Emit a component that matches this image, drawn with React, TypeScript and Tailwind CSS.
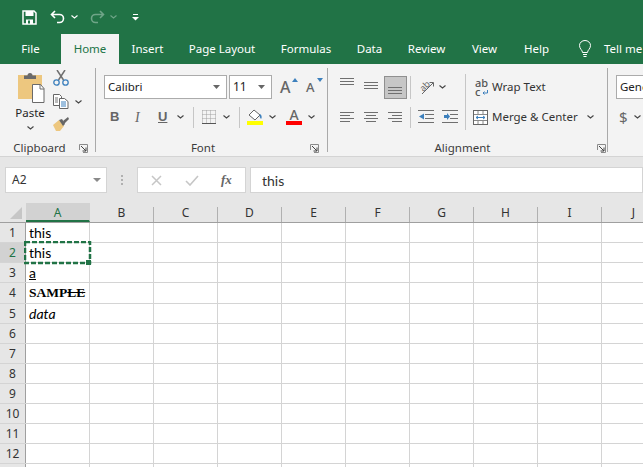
import React from "react";

const COLUMNS = ["A", "B", "C", "D", "E", "F", "G", "H", "I", "J"];
const ROW_HEIGHTS = [20, 20, 20, 21, 20, 20, 20, 20, 20, 20, 20, 20, 20];

const TABS = [
	{ name: "File", width: "w-[61px]" },
	{ name: "Home", width: "w-[58px]" },
	{ name: "Insert", width: "w-[57px]" },
	{ name: "Page Layout", width: "w-[92px]" },
	{ name: "Formulas", width: "w-[76px]" },
	{ name: "Data", width: "w-[51px]" },
	{ name: "Review", width: "w-[63px]" },
	{ name: "View", width: "w-[53px]" },
	{ name: "Help", width: "w-[51px]" },
];

const Chevron = ({ className = "" }: { className?: string }) => (
	<svg width="7" height="4" viewBox="0 0 7 4" className={`shrink-0 ${className}`}>
		<path d="M.5.5l3 2.5 3-2.5" fill="none" stroke="currentColor" strokeWidth="1.1" />
	</svg>
);

const Launcher = () => (
	<svg width="9" height="9" viewBox="0 0 9 9" className="shrink-0">
		<path d="M.5 6V.5H8.500V8.500H4" fill="none" stroke="#8a8a8a" />
		<path d="M2 2l5 5M7 3.500V7H3.500" fill="none" stroke="#444" />
	</svg>
);

const TextLines = ({ lines }: { lines: Array<[number, number, number]> }) => (
	<svg width="15" height="15" viewBox="0 0 15 15" className="shrink-0">
		{lines.map(([x, y, w], i) => (
			<rect key={i} x={x} y={y} width={w} height="1" fill="#6f6f6f" />
		))}
	</svg>
);

const VSep = ({ className = "" }: { className?: string }) => (
	<div className={`w-px bg-[#c6c6c6] ${className}`} />
);

const GroupLabel = ({ label, width }: { label: string; width: string }) => (
	<div className="flex items-center h-[16px] mt-auto mb-[-4px]">
		<span className={`${width} text-center text-[11.5px] leading-[16px] text-[#3b3b3b]`}>{label}</span>
		<Launcher />
	</div>
);

const TitleBar = () => (
	<div className="h-[34px] flex items-center pl-[22px] text-white">
		<svg width="15" height="15" viewBox="0 0 15 15" className="shrink-0">
			<path d="M1 1h11l2 2v11H1z" fill="none" stroke="#fff" strokeWidth="1.500" />
			<rect x="3.500" y="1" width="8" height="5" fill="#fff" />
			<rect x="4" y="9.500" width="7" height="4.500" fill="#fff" />
			<rect x="6" y="10.500" width="2" height="3" fill="#217346" />
		</svg>
		<svg width="16" height="14" viewBox="0 0 16 14" className="ml-[13px] shrink-0">
			<path d="M5 1L1.500 4.500 5 8M2 4.500h7.500a4 4 0 0 1 0 8H7" fill="none" stroke="#fff" strokeWidth="1.600" />
		</svg>
		<Chevron className="ml-[5px] text-white" />
		<svg width="16" height="14" viewBox="0 0 16 14" className="ml-[11px] shrink-0">
			<path d="M11 1l3.500 3.500L11 8M14 4.500H6.500a4 4 0 0 0 0 8H9" fill="none" stroke="#6fa588" strokeWidth="1.600" />
		</svg>
		<Chevron className="ml-[5px] text-[#6fa588]" />
		<svg width="7" height="7" viewBox="0 0 7 7" className="ml-[15px] shrink-0">
			<rect x="1" y="0" width="5" height="1" fill="#fff" />
			<path d="M0 3h7L3.500 6.500z" fill="#fff" />
		</svg>
	</div>
);

const TabBar = () => (
	<div className="h-[30px] flex text-[11.5px] text-white">
		{TABS.map((tab) => (
			<div
				key={tab.name}
				className={`${tab.width} shrink-0 flex items-center justify-center ${
					tab.name === "Home" ? "bg-[#f3f3f3] text-[#217346]" : ""
				}`}
			>
				{tab.name}
			</div>
		))}
		<svg width="14" height="18" viewBox="0 0 14 18" className="ml-[16px] mt-[6px] shrink-0">
			<path d="M4.500 12.500C4.500 10 1.500 9 1.500 5.500a5.500 5 0 0 1 11 0C12.500 9 9.500 10 9.500 12.500z" fill="none" stroke="#fff" />
			<path d="M5 14.500h4M5.500 16.500h3" stroke="#fff" />
		</svg>
		<div className="ml-[12px] whitespace-nowrap flex items-center">Tell me</div>
	</div>
);

const ClipboardGroup = () => (
	<div className="w-[96px] shrink-0 flex flex-col border-r border-[#a9a9a9]">
		<div className="flex flex-1 pt-[3px] pl-[14px]">
			<div className="w-[32px] flex flex-col items-center text-[11.5px] text-[#262626]">
				<svg width="30" height="32" viewBox="0 0 30 32" className="shrink-0">
					<path d="M3 4h24v24H3z" fill="#edc77f" />
					<path d="M9 4.500h3.500a2.500 2.500 0 0 1 5 0H21V8H9z" fill="#6a6a6a" />
					<path d="M17.500 13.500h8l3.500 4v14H17.500z" fill="#fff" stroke="#6a6a6a" />
					<path d="M25 13.500v4.500h4" fill="none" stroke="#6a6a6a" />
				</svg>
				<span className="leading-[16px] mt-[2px]">Paste</span>
				<Chevron className="mt-[5px] text-[#444]" />
			</div>
			<div className="flex flex-col ml-[7px] mt-[-1px]">
				<svg width="16" height="16" viewBox="0 0 16 16" className="shrink-0">
					<path d="M4 0l6.500 10M12 0L5.500 10" stroke="#6f6f6f" strokeWidth="1.500" fill="none" />
					<circle cx="3.500" cy="12.500" r="2.700" fill="none" stroke="#3d80bd" strokeWidth="1.300" />
					<circle cx="12.500" cy="12.500" r="2.700" fill="none" stroke="#3d80bd" strokeWidth="1.300" />
				</svg>
				<div className="flex items-center mt-[8px]">
					<svg width="16" height="15" viewBox="0 0 16 15" className="shrink-0">
						<path d="M.5.500h6l2 2v9H.5z" fill="#fff" stroke="#666" />
						<path d="M6.500 4.500h5l3.500 3v7h-8.500z" fill="#fff" stroke="#666" />
						<path d="M2 4h3M2 6h3M2 8h3" stroke="#777" />
						<path d="M8 8h5M8 10h5M8 12h5" stroke="#3d80bd" />
					</svg>
					<Chevron className="ml-[6px] text-[#444]" />
				</div>
				<svg width="16" height="15" viewBox="0 0 16 15" className="mt-[7px] shrink-0">
					<path d="M0 9l6-5 5 6-4 5H3z" fill="#edc77f" />
					<path d="M6 4l3-1 3 5-2 2z" fill="#666" />
					<path d="M10 5l5-4 1 2-5 5z" fill="#666" />
				</svg>
			</div>
		</div>
		<GroupLabel label="Clipboard" width="w-[79px]" />
	</div>
);

const FontGroup = () => (
	<div className="w-[232px] shrink-0 flex flex-col border-r border-[#a9a9a9]">
		<div className="flex flex-col flex-1 pt-[7px] pl-[8px]">
			<div className="flex items-center">
				<div className="w-[123px] h-[24px] bg-white border border-[#ababab] flex items-center justify-between px-[3px] text-[11.5px] text-[#222]">
					<span>Calibri</span>
					<svg width="7" height="4" viewBox="0 0 7 4" className="mr-[3px]"><path d="M0 0h7L3.500 4z" fill="#666" /></svg>
				</div>
				<div className="w-[43px] h-[24px] ml-[2px] bg-white border border-[#ababab] flex items-center justify-between px-[3px] text-[12px] text-[#222]">
					<span>11</span>
					<svg width="7" height="4" viewBox="0 0 7 4" className="mr-[3px]"><path d="M0 0h7L3.500 4z" fill="#666" /></svg>
				</div>
				<div className="relative ml-[8px] w-[14px] text-[16px] leading-[20px] font-medium text-[#666]">
					A
					<svg width="6" height="4" viewBox="0 0 6 4" className="absolute right-[-4px] top-[1px]"><path d="M0 4l3-4 3 4z" fill="#3d80bd" /></svg>
				</div>
				<div className="relative ml-[12px] w-[12px] text-[13px] leading-[20px] font-medium text-[#666]">
					A
					<svg width="6" height="4" viewBox="0 0 6 4" className="absolute right-[-5px] top-[1px]"><path d="M0 0h6L3 4z" fill="#3d80bd" /></svg>
				</div>
			</div>
			<div className="flex items-center mt-[7px] h-[22px] text-[#666]">
				<span className="w-[10px] ml-[6px] text-[13px] font-bold font-['Liberation_Sans']">B</span>
				<span className="w-[10px] ml-[15px] text-[14px] italic font-['Liberation_Serif']">I</span>
				<span className="w-[10px] ml-[13px] text-[13px] font-bold underline font-['Liberation_Sans']">U</span>
				<Chevron className="ml-[9px] text-[#444]" />
				<VSep className="h-[21px] ml-[9px]" />
				<svg width="14" height="14" viewBox="0 0 14 14" className="ml-[8px] shrink-0">
					<path d="M.5.500h13M.5 4.500h13M.5 8.500h13M.5.500v13M4.500.500v13M8.500.500v13M13.500.500v13" stroke="#a0a0a0" strokeDasharray="1 1" fill="none" />
					<path d="M0 13.500h14" stroke="#555" />
				</svg>
				<Chevron className="ml-[7px] text-[#444]" />
				<VSep className="h-[21px] ml-[9px]" />
				<div className="flex flex-col items-center ml-[7px] w-[16px]">
					<svg width="16" height="12" viewBox="0 0 16 12" className="shrink-0">
						<path d="M7 1l6 5-5 5-6-5z" fill="#fff" stroke="#666" />
						<path d="M13 5c2 1 2 4 1 5-1-1-2-3-1-5z" fill="#3d80bd" />
					</svg>
					<div className="w-[16px] h-[4px] bg-[#ffff00]" />
				</div>
				<Chevron className="ml-[6px] text-[#444]" />
				<div className="flex flex-col items-center ml-[10px] w-[16px]">
					<span className="text-[14px] leading-[12px] font-medium">A</span>
					<div className="w-[16px] h-[4px] bg-[#ff0000]" />
				</div>
				<Chevron className="ml-[6px] text-[#444]" />
			</div>
		</div>
		<GroupLabel label="Font" width="w-[214px]" />
	</div>
);

const AlignmentGroup = () => (
	<div className="w-[280px] shrink-0 flex flex-col border-r border-[#a9a9a9]">
		<div className="flex flex-1 pt-[7px]">
			<div className="flex flex-col w-[137px] pl-[12px]">
				<div className="flex items-center h-[24px]">
					<div className="mt-[-4px]"><TextLines lines={[[0, 0, 14], [0, 3, 14], [0, 6, 14]]} /></div>
					<div className="ml-[9px]"><TextLines lines={[[0, 2, 14], [0, 5, 14], [0, 8, 14]]} /></div>
					<div className="ml-[5px] w-[23px] h-[23px] bg-[#c6c6c6] border border-[#8f8f8f] flex items-center justify-center">
						<div className="mt-[3px]"><TextLines lines={[[0, 6, 14], [0, 9, 14], [0, 12, 14]]} /></div>
					</div>
					<VSep className="h-[23px] ml-[3px]" />
					<svg width="18" height="16" viewBox="0 0 18 16" className="ml-[7px] shrink-0 overflow-visible">
						<text x="2" y="11" fontSize="9" fill="#666" transform="rotate(-45 6 8)">ab</text>
						<path d="M4 15L15 4M11.500 3.500h4v4" stroke="#666" fill="none" />
					</svg>
					<Chevron className="ml-[3px] text-[#444]" />
				</div>
				<div className="flex items-center h-[22px] mt-[7px]">
					<TextLines lines={[[0, 2, 14], [0, 5, 10], [0, 8, 14], [0, 11, 10]]} />
					<div className="ml-[9px]"><TextLines lines={[[0, 2, 14], [2, 5, 10], [0, 8, 14], [2, 11, 10]]} /></div>
					<div className="ml-[9px]"><TextLines lines={[[0, 2, 14], [4, 5, 10], [0, 8, 14], [4, 11, 10]]} /></div>
					<VSep className="h-[21px] ml-[7px]" />
					<svg width="16" height="14" viewBox="0 0 16 14" className="ml-[7px] shrink-0">
						<path d="M0 .5h16M7 4.500h9M7 8.500h9M0 12.500h16" stroke="#6f6f6f" />
						<path d="M6 3.500v6L1 6.500z" fill="#3d80bd" />
						<path d="M3 6.500h3" stroke="#3d80bd" />
					</svg>
					<svg width="16" height="14" viewBox="0 0 16 14" className="ml-[8px] shrink-0">
						<path d="M0 .5h16M8 4.500h8M8 8.500h8M0 12.500h16" stroke="#6f6f6f" />
						<path d="M2 5h3V3l3 3.500L5 10V8H2z" fill="#3d80bd" />
					</svg>
				</div>
			</div>
			<VSep className="h-[56px] mt-[-1px]" />
			<div className="flex flex-col pl-[7px] text-[11.5px] text-[#333]">
				<div className="flex items-center h-[24px]">
					<div className="relative w-[14px] ml-[2px] text-[11px] leading-[9px] text-[#555] font-medium">
						<div>ab</div>
						<div>c</div>
						<svg width="6" height="5" viewBox="0 0 6 5" className="absolute right-[1px] bottom-[1px]">
							<path d="M5.500 0v3H1M2.500 1.500L1 3l1.500 1.500" fill="none" stroke="#3d80bd" />
						</svg>
					</div>
					<span className="ml-[3px]">Wrap Text</span>
				</div>
				<div className="flex items-center h-[22px] mt-[7px]">
					<svg width="15" height="15" viewBox="0 0 15 15" className="shrink-0">
						<rect x=".5" y=".5" width="14" height="14" fill="#fff" stroke="#666" />
						<path d="M1 4.500h13M1 10.500h13M5 1v3M10 1v3M5 11v3M10 11v3" stroke="#888" />
						<path d="M3 7.500h9M3 7.500l2-1.500M3 7.500l2 1.500M12 7.500l-2-1.500M12 7.500l-2 1.500" stroke="#3d80bd" fill="none" />
					</svg>
					<span className="ml-[4px]">Merge &amp; Center</span>
					<Chevron className="ml-[9px] text-[#444]" />
				</div>
			</div>
		</div>
		<GroupLabel label="Alignment" width="w-[269px]" />
	</div>
);

const NumberGroup = () => (
	<div className="flex-1 min-w-0 flex flex-col pt-[7px] pl-[8px] overflow-hidden">
		<div className="w-[60px] h-[24px] shrink-0 bg-white border border-[#ababab] flex items-center px-[3px] text-[11.5px] text-[#222]">
			General
		</div>
		<div className="flex items-center mt-[8px] pl-[3px] text-[15px] leading-[20px] text-[#666]">
			$
			<Chevron className="ml-[6px] text-[#444]" />
		</div>
	</div>
);

const Ribbon = () => (
	<div className="h-[92px] flex bg-[#f3f3f3] py-[4px]">
		<ClipboardGroup />
		<FontGroup />
		<AlignmentGroup />
		<NumberGroup />
	</div>
);

const FormulaBar = () => (
	<div className="h-[47px] border-t border-t-[#d4d4d4] flex items-start bg-[#e6e6e6] pl-[5px] pt-[10px]">
		<div className="w-[102px] h-[26px] bg-white border border-[#d4d4d4] flex items-center justify-between pl-[6px] pr-[5px] text-[12px] text-[#333]">
			<span>A2</span>
			<svg width="8" height="4" viewBox="0 0 8 4"><path d="M0 0h8L4 4z" fill="#8a8a8a" /></svg>
		</div>
		<div className="w-[30px] h-[26px] flex items-center justify-center">
			<div className="w-[2px] h-[10px] border-l-2 border-dotted border-[#b0b0b0]" />
		</div>
		<div className="w-[109px] h-[26px] bg-white border border-[#d4d4d4] flex items-center pl-[13px]">
			<svg width="11" height="11" viewBox="0 0 11 11" className="shrink-0">
				<path d="M1 1l9 9M10 1l-9 9" stroke="#c6c6c6" strokeWidth="1.500" />
			</svg>
			<svg width="14" height="11" viewBox="0 0 14 11" className="ml-[23px] shrink-0">
				<path d="M1 6l4 4 8-9" stroke="#c6c6c6" strokeWidth="1.600" fill="none" />
			</svg>
			<span className="ml-[22px] text-[13px] italic font-bold text-[#666] font-['Liberation_Serif']">
				fx
			</span>
		</div>
		<div className="flex-1 h-[26px] ml-[4px] bg-white border border-[#d4d4d4] flex items-center pl-[11px] text-[14px] text-[#333] font-[Lato]">
			this
		</div>
	</div>
);

const Sheet = () => (
	<div className="relative flex-1 min-h-0 overflow-hidden bg-white">
		<div className="flex h-[20px] bg-[#e6e6e6] border-b border-[#9f9f9f]">
			<div className="w-[26px] shrink-0 flex items-end justify-end pr-[4px] pb-[3px]">
				<svg width="12" height="12" viewBox="0 0 12 12"><path d="M12 0v12H0z" fill="#c6c6c6" /></svg>
			</div>
			{COLUMNS.map((col) => (
				<div
					key={col}
					className={`w-[64px] shrink-0 flex items-center justify-center text-[12px] leading-none border-r ${
						col === "A"
							? "bg-[#d2d2d2] text-[#217346] border-b-2 border-b-[#217346] border-r-transparent pt-[2px]"
							: "text-[#333] border-r-[#b0b0b0] mt-[4px] pb-[3px]"
					}`}
				>
					{col}
				</div>
			))}
		</div>
		{ROW_HEIGHTS.map((height, i) => (
			<div key={i} className={`flex border-b border-[#d4d4d4] ${height === 21 ? "h-[21px]" : "h-[20px]"}`}>
				<div
					className={`w-[26px] shrink-0 border-r border-r-[#9f9f9f] flex items-center justify-center text-[12px] ${
						i === 1 ? "bg-[#d2d2d2] text-[#217346]" : "bg-[#e6e6e6] text-[#333]"
					}`}
				>
					{/* row 13 only shows its top edge, the number is below the window */}
					{i < 12 && i + 1}
				</div>
				{COLUMNS.map((col) => (
					<div key={col} className="w-[64px] shrink-0 border-r border-[#d4d4d4] flex items-center pl-[3px] text-[14px] text-black font-[Lato]">
						{col === "A" && i < 2 && "this"}
						{col === "A" && i === 2 && <span className="underline">a</span>}
						{col === "A" && i === 3 && (
							<span className="font-bold text-[13.5px] font-['Liberation_Serif']">
								SAMP<span className="line-through">LE</span>
							</span>
						)}
						{col === "A" && i === 4 && <span className="italic">data</span>}
					</div>
				))}
			</div>
		))}
		<svg width="68" height="24" viewBox="0 0 68 24" className="absolute left-[24px] top-[38px]">
			<rect x="1" y="1" width="65" height="21" fill="none" stroke="#217346" strokeWidth="2.500" strokeDasharray="5 2" />
			<rect x="62" y="19" width="5" height="5" fill="#217346" />
		</svg>
	</div>
);

const App: React.FC = () => {
	return (
		<div className="w-[643px] h-[467px] overflow-hidden flex flex-col bg-white font-['Noto_Sans',sans-serif]">
			<div className="bg-[#217346]">
				<TitleBar />
				<TabBar />
			</div>
			<Ribbon />
			<FormulaBar />
			<Sheet />
		</div>
	);
};

export default App;
